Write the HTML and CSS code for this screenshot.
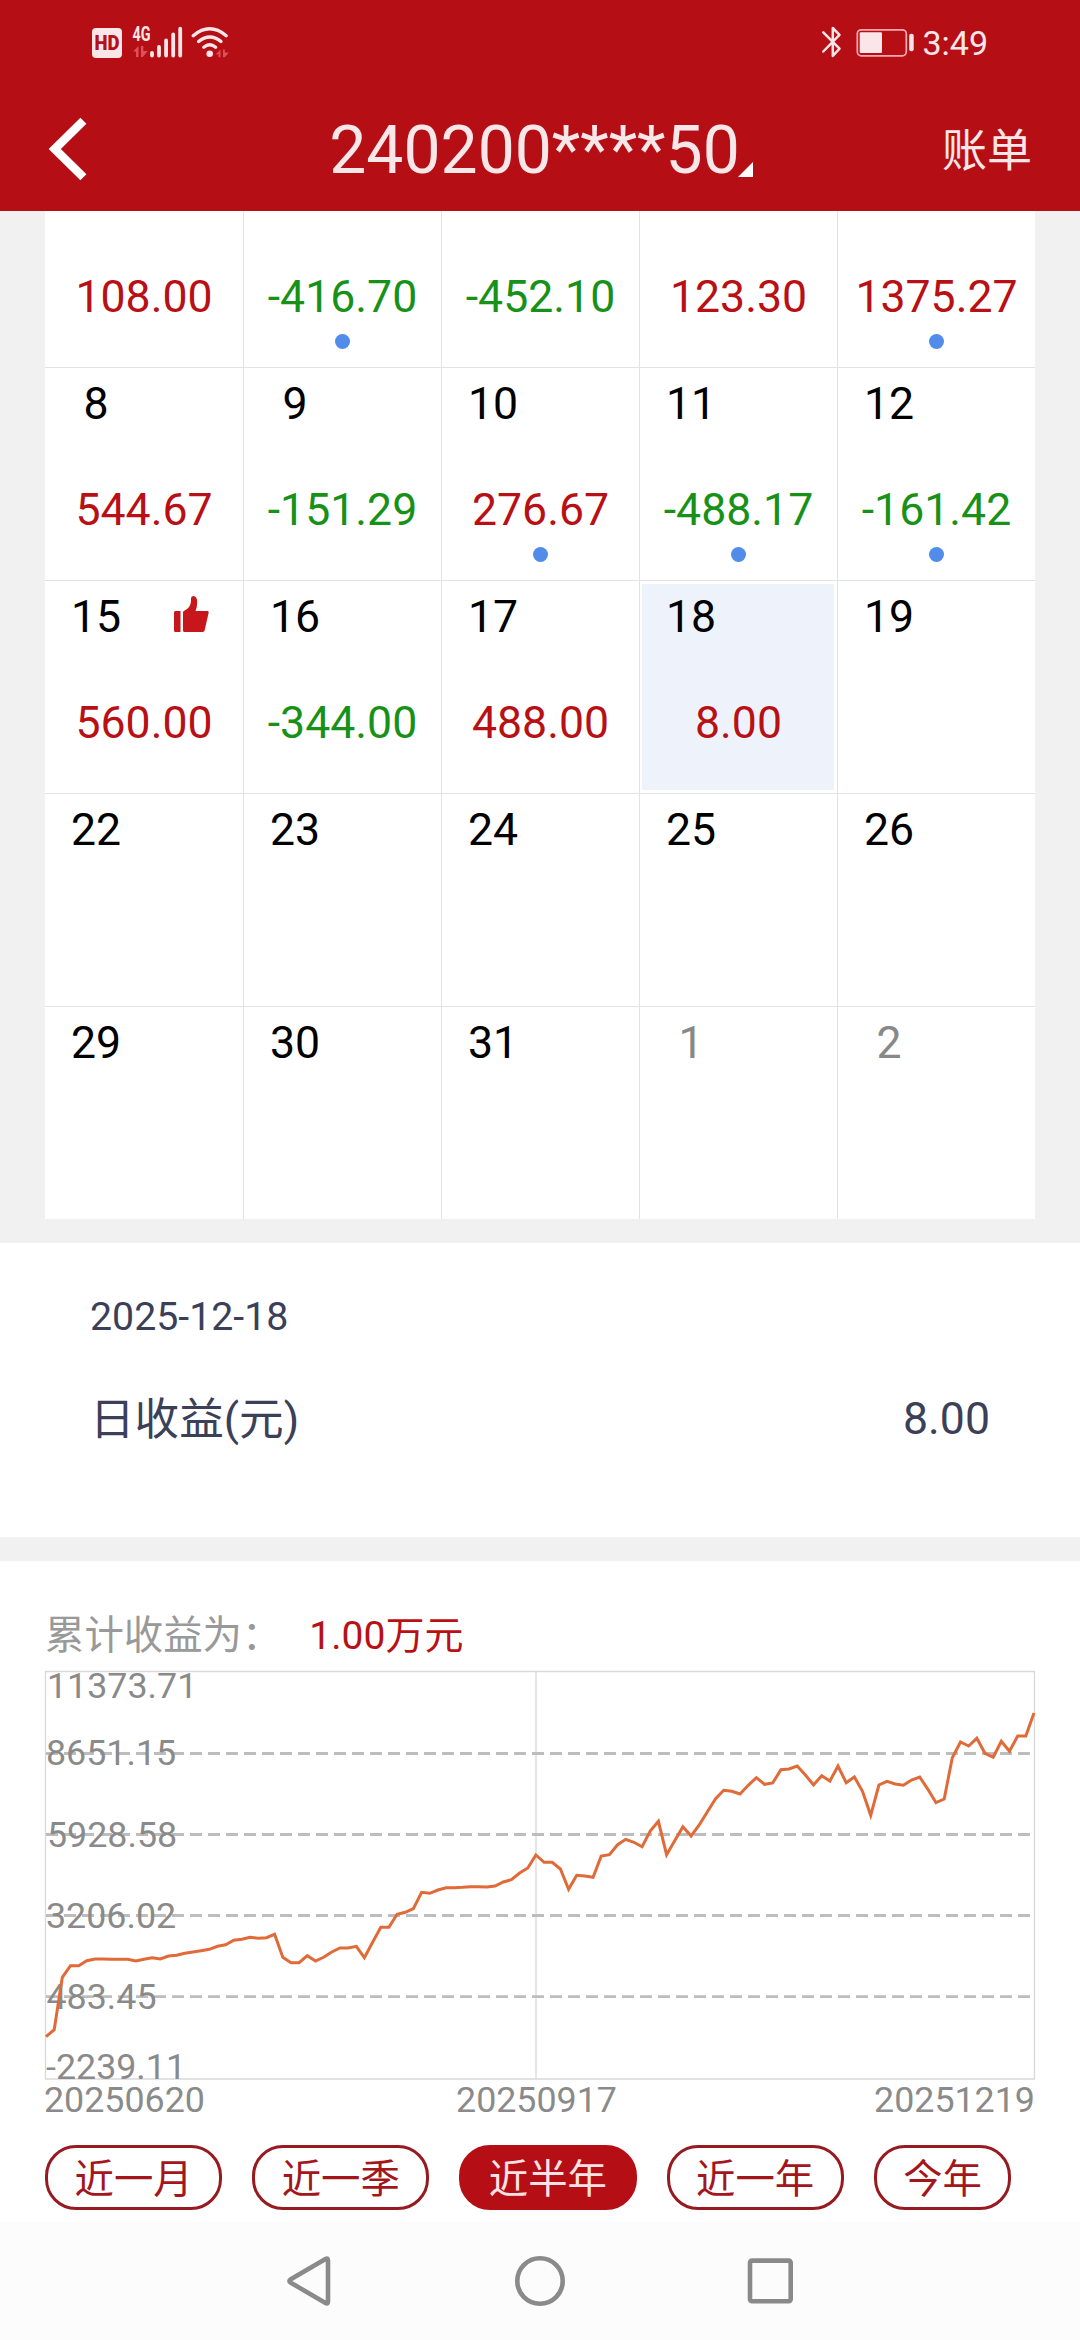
FILE: index.html
```
<!DOCTYPE html>
<html lang="zh-CN">
<head>
    <meta charset="UTF-8">
    <meta name="viewport" content="width=device-width, initial-scale=1.0">
    <title>收益日历</title>
    <link rel="stylesheet" href="styles.css">
</head>
<body>
    <header class="header">
        <div class="status-bar">
            <svg class="status-left" width="140" height="36" viewBox="90 25 140 36">
                <rect x="92" y="28" width="30" height="30" rx="4" fill="#fae6e8"/>
                <text class="hd" x="94.5" y="50" textLength="25" lengthAdjust="spacingAndGlyphs">HD</text>
                <text class="net" x="132.5" y="40.7" textLength="18" lengthAdjust="spacingAndGlyphs">4G</text>
                <path fill="#d9525b" d="M133 51.500l5.500-5.500v11h-2.500v-5.500zM141 46h2.300v5h4.500l-5 6h-1.800z"/>
                <g stroke="#fae6e8" stroke-width="3.800" stroke-linecap="round">
                    <path d="M152 53v2.500M159 47v8.500M166.100 40.500v15M173.200 34.500v21M180.200 28.700v26.800"/>
                </g>
                <g fill="none" stroke="#fae6e8" stroke-width="3.400" stroke-linecap="round">
                    <path d="M193.200 35.700q16.500-13.800 33 0M198.600 41.500q11.200-9.200 22.400 0M203.800 47.200q5.900-4.800 11.800 0"/>
                </g>
                <circle cx="209.700" cy="53.700" r="3.300" fill="#fae6e8"/>
                <path fill="#d9525b" d="M215.500 54.500l5-5v7.800h-2v-3zM223 49.500h1.800v3h4l-4 4.800h-1.800z"/>
            </svg>
            <div class="status-right">
                <svg width="96" height="36" viewBox="820 25 96 36">
                    <path d="M823.300 32.300l16.200 16.400-6.700 7.300v-28l6.700 6.800-16.200 16.700" fill="none" stroke="#fae6e8" stroke-width="2.500" stroke-linejoin="round" stroke-linecap="round"/>
                    <rect x="857.300" y="29.800" width="49" height="26" rx="4" fill="none" stroke="#f4a9ae" stroke-width="1.700"/>
                    <rect x="859.700" y="32.300" width="22.300" height="20.600" rx="1" fill="#fae6e8"/>
                    <rect x="909.200" y="33.700" width="4.500" height="17.500" rx="2" fill="#fae6e8"/>
                </svg>
                <span class="time">3:49</span>
            </div>
        </div>
        <nav class="title-bar">
            <svg class="back" width="44" height="66" viewBox="45 115 44 66">
                <path d="M83.400 119.800L54.800 148l28.600 28.200" fill="none" stroke="#fff" stroke-width="8.600"/>
            </svg>
            <h1 class="account">240200****50<i class="corner"></i></h1>
            <a class="bill">账单</a>
        </nav>
    </header>

    <main>
        <!-- Daily profit calendar -->
        <section class="calendar">
            <div class="cell cut"><span class="value up">108.00</span></div>
            <div class="cell cut"><span class="value down">-416.70</span><i class="dot"></i></div>
            <div class="cell cut"><span class="value down">-452.10</span></div>
            <div class="cell cut"><span class="value up">123.30</span></div>
            <div class="cell cut"><span class="value up">1375.27</span><i class="dot"></i></div>

            <div class="cell"><span class="day">8</span><span class="value up">544.67</span></div>
            <div class="cell"><span class="day">9</span><span class="value down">-151.29</span></div>
            <div class="cell"><span class="day">10</span><span class="value up">276.67</span><i class="dot"></i></div>
            <div class="cell"><span class="day">11</span><span class="value down">-488.17</span><i class="dot"></i></div>
            <div class="cell"><span class="day">12</span><span class="value down">-161.42</span><i class="dot"></i></div>

            <div class="cell">
                <span class="day">15</span>
                <svg class="thumb" width="35" height="36" viewBox="0 0 35 36">
                    <path fill="#c8161d" d="M1.500 15H6.500V36H1.500Q0 36 0 34.500V16.500Q0 15 1.500 15ZM9 16.500Q9 15.300 10.200 14.800Q16.800 11.600 17 5V2.500Q17 0 19.300 0Q23 .3 23.200 5.500Q23.300 11 21.500 15H33.500Q35 15 34.700 16.500L30.600 34.600Q30.200 36 28.800 36H10.500Q9 36 9 34.500Z"/>
                </svg>
                <span class="value up">560.00</span>
            </div>
            <div class="cell"><span class="day">16</span><span class="value down">-344.00</span></div>
            <div class="cell"><span class="day">17</span><span class="value up">488.00</span></div>
            <div class="cell selected"><span class="day">18</span><span class="value up">8.00</span></div>
            <div class="cell"><span class="day">19</span></div>

            <div class="cell"><span class="day">22</span></div>
            <div class="cell"><span class="day">23</span></div>
            <div class="cell"><span class="day">24</span></div>
            <div class="cell"><span class="day">25</span></div>
            <div class="cell"><span class="day">26</span></div>

            <div class="cell"><span class="day">29</span></div>
            <div class="cell"><span class="day">30</span></div>
            <div class="cell"><span class="day">31</span></div>
            <div class="cell"><span class="day other">1</span></div>
            <div class="cell"><span class="day other">2</span></div>
        </section>

        <section class="detail">
            <p class="detail-date">2025-12-18</p>
            <div class="detail-row">
                <span class="detail-label">日收益(元)</span>
                <span>8.00</span>
            </div>
        </section>

        <!-- Cumulative profit chart -->
        <section class="profit">
            <p class="summary">累计收益为：<strong>1.00万元</strong></p>
            <svg class="chart" width="990" height="409" viewBox="0 0 990 409">
                <path class="frame" d="M.5 .5H989.500V408H.500Z"/>
                <path class="frame" d="M491 0V408"/>
                <path class="grid" d="M1 82.500H986M1 163.500H986M1 244.500H986M1 325.700H986"/>
                <g class="axis">
                    <text x="2" y="26.500">11373.71</text>
                    <text x="1" y="93.700">8651.15</text>
                    <text x="2" y="175.700">5928.58</text>
                    <text x="1" y="256.700">3206.02</text>
                    <text x="1.500" y="337.700">483.45</text>
                    <text x="1" y="408">-2239.11</text>
                </g>
                <polyline id="line" class="line"/>
            </svg>
            <div class="dates">
                <span>20250620</span>
                <span>20250917</span>
                <span>20251219</span>
            </div>
            <div class="ranges">
                <button>近一月</button>
                <button>近一季</button>
                <button class="active">近半年</button>
                <button>近一年</button>
                <button>今年</button>
            </div>
        </section>
    </main>

    <footer class="nav-bar">
        <svg width="50" height="54" viewBox="284 2254 50 54">
            <path d="M325.500 2258.900Q328 2257.500 328 2260.500V2301.500Q328 2304.500 325.500 2303.100L290.800 2282.700Q288 2281 290.800 2279.300Z"/>
        </svg>
        <svg width="54" height="54" viewBox="0 0 54 54">
            <circle cx="27" cy="27" r="22.700"/>
        </svg>
        <svg width="50" height="54" viewBox="0 0 50 54">
            <rect x="4" y="6.600" width="40.700" height="40.700" rx="2"/>
        </svg>
    </footer>

    <script>
        // vertical position of each trading day, three units per pixel
        const series = [
            1310, 1289, 1132, 1097, 1097, 1082, 1077, 1077, 1078, 1078, 1078, 1083, 1078, 1073, 1077,
            1068, 1066, 1060, 1056, 1052, 1048, 1039, 1034, 1021, 1018, 1012, 1015, 1013, 1003, 1072,
            1088, 1088, 1067, 1083, 1072, 1056, 1044, 1044, 1039, 1073, 1027, 982, 982, 943, 937,
            926, 877, 880, 870, 863, 863, 862, 860, 860, 861, 858, 846, 839, 819, 804,
            765, 787, 787, 807, 868, 826, 828, 832, 768, 764, 734, 718, 727, 740, 693,
            664, 764, 722, 680, 708, 675, 635, 596, 571, 574, 582, 556, 533, 553, 549,
            509, 507, 498, 525, 555, 527, 543, 498, 548, 531, 574, 646, 555, 544, 552,
            556, 540, 531, 568, 608, 597, 473, 426, 438, 415, 460, 472, 424, 454, 408,
            408, 339
        ];
        const base = 213;
        const step = 988 / (series.length - 1);
        document.getElementById('line').setAttribute('points', series.map(function(v, i) {
            return (1 + i * step).toFixed(1) + ',' + ((v - base) / 3).toFixed(1);
        }).join(' '));
    </script>
</body>
</html>
```
FILE: styles.css
```
* {
    box-sizing: border-box;
}

body {
    margin: 0;
    width: 1080px;
    height: 2340px;
    overflow: hidden;
    background: #f1f1f1;
    font-family: Roboto, "Noto Sans CJK SC", sans-serif;
}

/* Red header */
.header {
    height: 211px;
    background: #b50f15;
    color: #f8e7e9;
}

.status-bar {
    display: flex;
    justify-content: space-between;
    height: 86px;
    padding: 25px 92px 0 90px;
}

.status-bar svg {
    display: block;
    overflow: visible;
}

.status-right {
    display: flex;
    gap: 6px;
}

.hd {
    font-size: 20px;
    font-weight: 900;
    fill: #b50f15;
}

.net {
    font-size: 20px;
    font-weight: 700;
    fill: #fae6e8;
}

.time {
    font-size: 34px;
    line-height: 36px;
}

.title-bar {
    display: grid;
    grid-template-columns: 1fr auto 1fr;
    align-items: center;
    height: 125px;
    padding: 0 48px 0 45px;
}

.account {
    display: flex;
    align-items: flex-end;
    margin: 4px 0 0 5px;
    font-size: 66px;
    font-weight: 400;
    line-height: 72px;
}

.corner {
    margin: 0 0 10px -2px;
    border-bottom: 15px solid #fff;
    border-left: 15px solid transparent;
}

.bill {
    justify-self: end;
    margin-top: -3px;
    font-size: 45px;
}

/* Calendar */
.calendar {
    display: grid;
    grid-template-columns: repeat(5, 198px);
    grid-template-rows: 156px;
    grid-auto-rows: 213px;
    width: 990px;
    margin: 0 45px;
    background: #fff;
}

.cell {
    display: grid;
    grid-template-columns: 102px 1fr;
    grid-template-rows: 52px 60px auto;
    row-gap: 50px;
    justify-items: center;
    padding-top: 10px;
    border-top: 1px solid #e3e3e3;
    border-left: 1px solid #e3e3e3;
}

.cell:nth-child(5n + 1) {
    border-left: none;
}

.cell.cut {
    grid-template-rows: 60px auto;
    padding-top: 56px;
    border-top: none;
}

.day {
    font-size: 44.6px;
    line-height: 52px;
    color: #000;
}

.day.other {
    color: #888;
}

.value {
    grid-column: 1 / 3;
    font-size: 44.6px;
    line-height: 60px;
}

.up {
    color: #b81014;
}

.down {
    color: #179118;
}

.dot {
    grid-column: 1 / 3;
    width: 15px;
    height: 15px;
    margin-top: -43px;
    border-radius: 50%;
    background: #518ceb;
}

.thumb {
    margin: 5px 8px 0 0;
}

.selected {
    background: #eef3fb;
    box-shadow: inset 2px 3px #fff, inset -3px -3px #fff;
}

/* Selected day */
.detail {
    height: 294px;
    margin-top: 24px;
    padding: 49px 90px 0;
    background: #fff;
    color: #3b4058;
}

.detail-date {
    margin: 0;
    font-size: 39.3px;
    line-height: 50px;
}

.detail-row {
    display: flex;
    justify-content: space-between;
    margin-top: 47px;
    font-size: 44.6px;
    line-height: 60px;
}

.detail-label {
    padding-top: 1px;
}

/* Chart card */
.profit {
    height: 661px;
    margin-top: 24px;
    padding: 50px 45px 0;
    background: #fff;
}

.summary {
    margin: 0 0 10px;
    font-size: 39.4px;
    line-height: 50px;
    color: #999;
}

.summary strong {
    margin-left: 28px;
    font-weight: 400;
    font-size: 39px;
    color: #b81014;
}

.chart {
    display: block;
    overflow: visible;
}

.frame {
    fill: none;
    stroke: #d9d9d9;
    stroke-width: 1.3;
}

.grid {
    stroke: #bdbdbd;
    stroke-width: 2.8;
    stroke-dasharray: 12 6;
}

.axis {
    font-size: 35.8px;
    fill: #8a8a8a;
}

.line {
    fill: none;
    stroke: #e06a38;
    stroke-width: 3;
}

.dates {
    display: flex;
    justify-content: space-between;
    margin: -1px 0 0 -1px;
    font-size: 35.8px;
    line-height: 42px;
    color: #8a8a8a;
}

.dates span:nth-child(2) {
    margin-right: 6px;
}

.ranges {
    display: flex;
    gap: 30px;
    margin-top: 24px;
}

.ranges button {
    height: 65px;
    padding: 4px 26.5px 0;
    border: 3px solid #961a20;
    border-radius: 31px;
    background: #fff;
    font-family: inherit;
    font-size: 39.4px;
    line-height: 55px;
    color: #a3161b;
}

.ranges .active {
    border-color: #b50f15;
    background: #b50f15;
    color: #fbe3e5;
}

/* Android navigation */
.nav-bar {
    display: flex;
    justify-content: center;
    gap: 179px;
    height: 118px;
    padding-top: 32px;
    background: #fcfcfc;
}

.nav-bar svg {
    fill: none;
    stroke: #8a8a8a;
    stroke-width: 4.6;
}
```
